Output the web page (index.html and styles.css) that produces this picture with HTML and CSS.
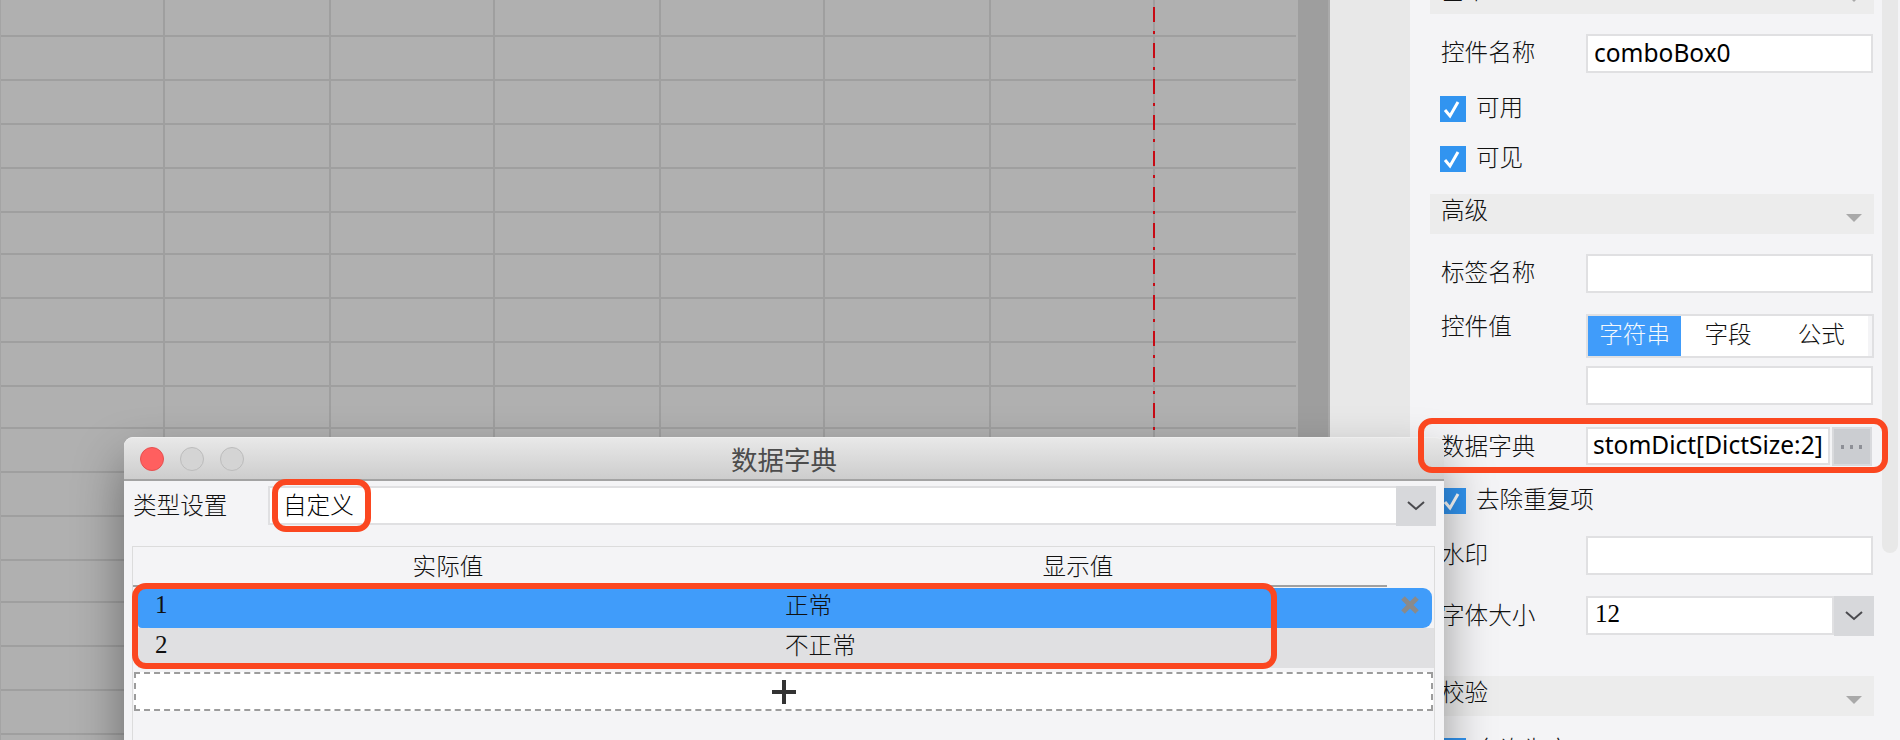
FILE: index.html
```html
<!DOCTYPE html>
<html lang="zh-CN">
<head>
    <meta charset="utf-8">
    <title>数据字典</title>
    <link rel="stylesheet" href="styles.css">
</head>

<body>
    <!-- Report canvas, greyed out behind the dialog -->
    <div class="canvas-area">
        <div class="sheet">
            <table class="grid">
                <tr class="row-first"><td></td><td></td><td></td><td></td><td></td><td></td><td></td><td></td></tr>
                <tr><td></td><td></td><td></td><td></td><td></td><td></td><td></td><td></td></tr>
                <tr><td></td><td></td><td></td><td></td><td></td><td></td><td></td><td></td></tr>
                <tr><td></td><td></td><td></td><td></td><td></td><td></td><td></td><td></td></tr>
                <tr><td></td><td></td><td></td><td></td><td></td><td></td><td></td><td></td></tr>
                <tr class="row-short"><td></td><td></td><td></td><td></td><td></td><td></td><td></td><td></td></tr>
                <tr><td></td><td></td><td></td><td></td><td></td><td></td><td></td><td></td></tr>
                <tr><td></td><td></td><td></td><td></td><td></td><td></td><td></td><td></td></tr>
                <tr><td></td><td></td><td></td><td></td><td></td><td></td><td></td><td></td></tr>
                <tr class="row-short"><td></td><td></td><td></td><td></td><td></td><td></td><td></td><td></td></tr>
                <tr><td></td><td></td><td></td><td></td><td></td><td></td><td></td><td></td></tr>
                <tr><td></td><td></td><td></td><td></td><td></td><td></td><td></td><td></td></tr>
                <tr><td></td><td></td><td></td><td></td><td></td><td></td><td></td><td></td></tr>
                <tr class="row-short"><td></td><td></td><td></td><td></td><td></td><td></td><td></td><td></td></tr>
                <tr><td></td><td></td><td></td><td></td><td></td><td></td><td></td><td></td></tr>
                <tr><td></td><td></td><td></td><td></td><td></td><td></td><td></td><td></td></tr>
                <tr><td></td><td></td><td></td><td></td><td></td><td></td><td></td><td></td></tr>
            </table>
            <div class="page-break"></div>
        </div>
        <div class="sheet-scroll"></div>
    </div>

    <div class="gutter"></div>

    <!-- Widget settings panel -->
    <div class="panel">
        <div class="group-head group-head-first">
            <span>基本</span>
            <i class="caret"></i>
        </div>
        <div class="field field-name">
            <div class="field-label">控件名称</div>
            <div class="text-box">comboBox0</div>
        </div>
        <div class="check-row check-enabled">
            <div class="check"><svg width="26" height="26" viewBox="0 0 26 26"><polyline points="5,14 10,20 18,6" /></svg></div>
            <span>可用</span>
        </div>
        <div class="check-row check-visible">
            <div class="check"><svg width="26" height="26" viewBox="0 0 26 26"><polyline points="5,14 10,20 18,6" /></svg></div>
            <span>可见</span>
        </div>

        <div class="group-head group-head-advanced">
            <span>高级</span>
            <i class="caret"></i>
        </div>
        <div class="field field-tag">
            <div class="field-label">标签名称</div>
            <div class="text-box"></div>
        </div>
        <div class="field field-value">
            <div class="field-label">控件值</div>
            <div class="tabs">
                <div class="tab tab-active">字符串</div>
                <div class="tab">字段</div>
                <div class="tab">公式</div>
            </div>
        </div>
        <div class="field field-value-input">
            <div class="field-label"></div>
            <div class="text-box"></div>
        </div>
        <div class="field field-dict">
            <div class="field-label label-low">数据字典</div>
            <div class="text-box dict-box">stomDict[DictSize:2]</div>
            <div class="more-btn">
                <svg width="22" height="4" viewBox="0 0 22 4"><rect x="0" y="0" width="3" height="4" /><rect x="9" y="0" width="3" height="4" /><rect x="18" y="0" width="3" height="4" /></svg>
            </div>
        </div>
        <div class="check-row check-dedupe">
            <div class="check"><svg width="26" height="26" viewBox="0 0 26 26"><polyline points="5,14 10,20 18,6" /></svg></div>
            <span>去除重复项</span>
        </div>
        <div class="field field-water">
            <div class="field-label">水印</div>
            <div class="text-box"></div>
        </div>
        <div class="field field-size">
            <div class="field-label label-low">字体大小</div>
            <div class="text-box size-box">12</div>
            <div class="drop-btn">
                <svg width="18" height="10" viewBox="0 0 18 10"><polyline points="1,1 9,8 17,1" /></svg>
            </div>
        </div>

        <div class="group-head group-head-check">
            <span>校验</span>
            <i class="caret"></i>
        </div>
        <div class="check-row check-allow">
            <div class="check"><svg width="26" height="26" viewBox="0 0 26 26"><polyline points="5,14 10,20 18,6" /></svg></div>
            <span>允许为空</span>
        </div>
    </div>

    <div class="panel-scroll"><div class="panel-thumb"></div></div>

    <!-- Data dictionary dialog -->
    <div class="dialog">
        <div class="titlebar">
            <div class="light light-close"></div>
            <div class="light"></div>
            <div class="light"></div>
            <div class="title">数据字典</div>
        </div>
        <div class="type-row">
            <div class="type-label">类型设置</div>
            <div class="combo">自定义</div>
            <div class="drop-btn">
                <svg width="18" height="10" viewBox="0 0 18 10"><polyline points="1,1 9,8 17,1" /></svg>
            </div>
        </div>
        <div class="dict-table">
            <div class="dict-head">
                <div>实际值</div>
                <div>显示值</div>
            </div>
            <div class="dict-row dict-row-active">
                <div class="dict-key">1</div>
                <div class="dict-val">正常</div>
                <svg class="remove" width="18" height="18" viewBox="0 0 18 18"><path d="M2 2 L16 16 M16 2 L2 16" /></svg>
            </div>
            <div class="dict-row">
                <div class="dict-key">2</div>
                <div class="dict-val">不正常</div>
            </div>
            <div class="add-row">
                <svg width="24" height="24" viewBox="0 0 24 24"><path d="M12 0 V24 M0 12 H24" /></svg>
            </div>
        </div>
    </div>

    <!-- Red marks drawn over the screenshot -->
    <div class="mark mark-dict"></div>
    <div class="mark mark-type"></div>
    <div class="mark mark-rows"></div>
</body>
</html>
```

FILE: styles.css
```css
* {
    box-sizing: border-box;
}

html, body {
    margin: 0;
    height: 740px;
    overflow: hidden;
}

body {
    display: flex;
    width: 1900px;
    position: relative;
    background-color: #e8e8e8;
    font-family: "Noto Sans", "Noto Sans CJK SC", sans-serif;
    font-size: 23.6px;
    font-weight: 300;
    color: #111111;
}

/* canvas */
.canvas-area {
    display: flex;
    width: 1330px;
    height: 740px;
    flex-shrink: 0;
}

.sheet {
    position: relative;
    width: 1298px;
    height: 740px;
    overflow: hidden;
    background-color: #b0b0b0;
    border-left: 1px solid #a4a4a4;
}

.grid {
    table-layout: fixed;
    width: 1295px;
    border-collapse: separate;
    border-spacing: 0;
}

.grid td {
    height: 44px;
    padding: 0;
    border-right: 2px solid #9f9f9f;
    border-bottom: 2px solid #9f9f9f;
}

.grid .row-first td {
    height: 37px;
}

.grid .row-short td {
    height: 42px;
}

.grid td:nth-child(1) { width: 164px; }
.grid td:nth-child(2) { width: 166px; }
.grid td:nth-child(3) { width: 164px; }
.grid td:nth-child(4) { width: 166px; }
.grid td:nth-child(5) { width: 164px; }
.grid td:nth-child(6) { width: 166px; }
.grid td:nth-child(7) { width: 164px; }
.grid td:nth-child(8) { border-right: none; }

.page-break {
    position: absolute;
    top: 0;
    left: 1152px;
    width: 2px;
    height: 740px;
    background-image: repeating-linear-gradient(to bottom,
        transparent 0, transparent 7px,
        #c80a14 7px, #c80a14 22px,
        transparent 22px, transparent 31px,
        #c80a14 31px, #c80a14 34px,
        transparent 34px, transparent 36px);
}

.sheet-scroll {
    width: 32px;
    background-color: #9e9e9e;
    border-right: 2px solid #aaaaaa;
}

.gutter {
    width: 80px;
    flex-shrink: 0;
    background-color: #e8e8e8;
}

/* settings panel */
.panel {
    width: 472px;
    height: 800px;
    flex-shrink: 0;
    margin-top: -26px;
    padding: 0 8px 0 20px;
    background-color: #f4f4f6;
}

.group-head {
    display: flex;
    justify-content: space-between;
    align-items: center;
    height: 40px;
    padding: 0 12px 10px 11px;
    background-color: #ececec;
}

.group-head-advanced { margin-top: 22px; }
.group-head-check { margin-top: 40px; }

.caret {
    width: 0;
    height: 0;
    margin-top: 18px;
    border-left: 8px solid transparent;
    border-right: 8px solid transparent;
    border-top: 8px solid #a9a9a9;
}

.field {
    display: flex;
}

.field-name { margin-top: 20px; }
.field-tag { margin-top: 20px; }
.field-value { margin-top: 21px; }
.field-value-input { margin-top: 8px; }
.field-dict { margin-top: 22px; }
.field-water { margin-top: 22px; }
.field-size { margin-top: 21px; }

.field-label {
    width: 156px;
    flex-shrink: 0;
    padding-left: 11px;
    line-height: 37px;
    white-space: nowrap;
}

.field-label.label-low {
    line-height: 39px;
}

.field-value .field-label {
    line-height: 25px;
}

.text-box {
    width: 287px;
    height: 39px;
    padding-left: 6px;
    border: 2px solid #e0e0e2;
    background-color: white;
    font-size: 24.5px;
    font-weight: 400;
    color: black;
    line-height: 33px;
    white-space: nowrap;
    overflow: hidden;
}

.dict-box {
    width: 244px;
    height: 38px;
    padding-left: 5px;
    line-height: 32px;
}

.size-box {
    width: 248px;
    padding-left: 7px;
    font-family: "Liberation Serif", serif;
    font-size: 25px;
    line-height: 31px;
}

.more-btn {
    display: flex;
    align-items: center;
    justify-content: center;
    width: 40px;
    height: 39px;
    margin-left: 2px;
    background-color: #cbcdd1;
    border: 2px solid #d9dadd;
}

.more-btn rect {
    fill: #8d8f96;
}

.drop-btn {
    display: flex;
    align-items: center;
    justify-content: center;
    width: 40px;
    height: 40px;
    flex-shrink: 0;
    background-color: #d7d8db;
}

.drop-btn polyline {
    fill: none;
    stroke: #4a4a4e;
    stroke-width: 2;
}

.check-row {
    display: flex;
    align-items: center;
    gap: 10px;
    height: 26px;
    padding-left: 10px;
}

.check-row span {
    margin-bottom: 7px;
}

.check-enabled { margin-top: 23px; }
.check-visible { margin-top: 24px; }
.check-dedupe { margin-top: 22px; }
.check-allow { margin-top: 22px; }

.check {
    width: 26px;
    height: 26px;
    flex-shrink: 0;
    background-color: #3194f0;
}

.check svg {
    display: block;
}

.check polyline {
    fill: none;
    stroke: white;
    stroke-width: 3;
}

.tabs {
    display: flex;
    width: 288px;
    height: 44px;
    padding-right: 4px;
    border: 2px solid #e0e0e2;
    background-color: #f4f4f6;
}

.tab {
    width: 94px;
    background-color: white;
    text-align: center;
    line-height: 36px;
}

.tab-active {
    background-color: #409cfa;
    color: #f4f8fd;
}

.panel-scroll {
    width: 18px;
    height: 740px;
    flex-shrink: 0;
    padding-right: 2px;
    background-color: #f4f4f6;
}

.panel-thumb {
    height: 553px;
    background-color: #e8e8e8;
    border-radius: 0 0 8px 8px;
}

/* dialog */
.dialog {
    position: absolute;
    top: 437px;
    left: 124px;
    width: 1320px;
    height: 340px;
    padding-bottom: 20px;
    background-color: #f4f4f6;
    border-radius: 9px 9px 0 0;
    box-shadow: 0 24px 50px rgba(0, 0, 0, 0.4);
}

.titlebar {
    display: flex;
    align-items: center;
    gap: 16px;
    position: relative;
    height: 44px;
    padding-left: 16px;
    border-radius: 9px 9px 0 0;
    border-top: 1px solid #eeeeee;
    border-bottom: 2px solid #a3a3a3;
    background: linear-gradient(to bottom, #e8e8e8, #cdcdcd);
}

.light {
    width: 24px;
    height: 24px;
    border-radius: 50%;
    border: 1px solid #bcbcbc;
    background-color: #d4d4d4;
}

.light-close {
    border-color: #e65050;
    background-color: #ff5f5f;
}

.title {
    position: absolute;
    left: 0;
    right: 0;
    padding-top: 4px;
    text-align: center;
    font-size: 26.5px;
    font-weight: 400;
    color: #4c4c4c;
    line-height: 37px;
}

.type-row {
    display: flex;
    align-items: flex-start;
    margin-top: 5px;
    padding: 0 8px 0 9px;
}

.type-label {
    width: 135px;
    line-height: 38px;
}

.combo {
    flex: 1;
    height: 39px;
    padding-left: 13px;
    border-top: 2px solid #e0e0e2;
    border-bottom: 2px solid #e0e0e2;
    border-left: 2px solid #e0e0e2;
    background-color: white;
    line-height: 35px;
    color: black;
}

.dict-table {
    height: 300px;
    margin: 20px 9px 0 8px;
    border: 1px solid #dcdcdc;
}

.dict-head {
    display: grid;
    grid-template-columns: 630px 630px;
    width: 1254px;
    height: 40px;
    border-bottom: 2px solid #a0a0a0;
    text-align: center;
    line-height: 38px;
}

.dict-row {
    display: flex;
    align-items: center;
    height: 40px;
    margin: 0 0 0 5px;
    padding-bottom: 6px;
    background-color: #e0e0e2;
}

.dict-row-active {
    margin: 1px 2px 0 5px;
    background-color: #409cfa;
    border-radius: 4px 9px 9px 4px;
}

.dict-key {
    width: 647px;
    padding-left: 17px;
    font-family: "Liberation Serif", serif;
    font-size: 25px;
    font-weight: 400;
    line-height: 34px;
}

.dict-val {
    flex: 1;
    line-height: 34px;
}

.remove {
    margin-right: 13px;
}

.remove path {
    fill: none;
    stroke: #8a8a8a;
    stroke-width: 5;
}

.add-row {
    display: flex;
    align-items: center;
    justify-content: center;
    height: 39px;
    margin: 4px 1px 0 1px;
    border: 2px dashed #9c9c9c;
    background-color: white;
}

.add-row path {
    fill: none;
    stroke: #333333;
    stroke-width: 4;
}

/* red marks */
.mark {
    position: absolute;
    border: 6px solid #fb4720;
    border-radius: 14px;
}

.mark-dict {
    top: 418px;
    left: 1418px;
    width: 470px;
    height: 55px;
}

.mark-type {
    top: 479px;
    left: 272px;
    width: 99px;
    height: 53px;
}

.mark-rows {
    top: 583px;
    left: 132px;
    width: 1145px;
    height: 86px;
}
```
